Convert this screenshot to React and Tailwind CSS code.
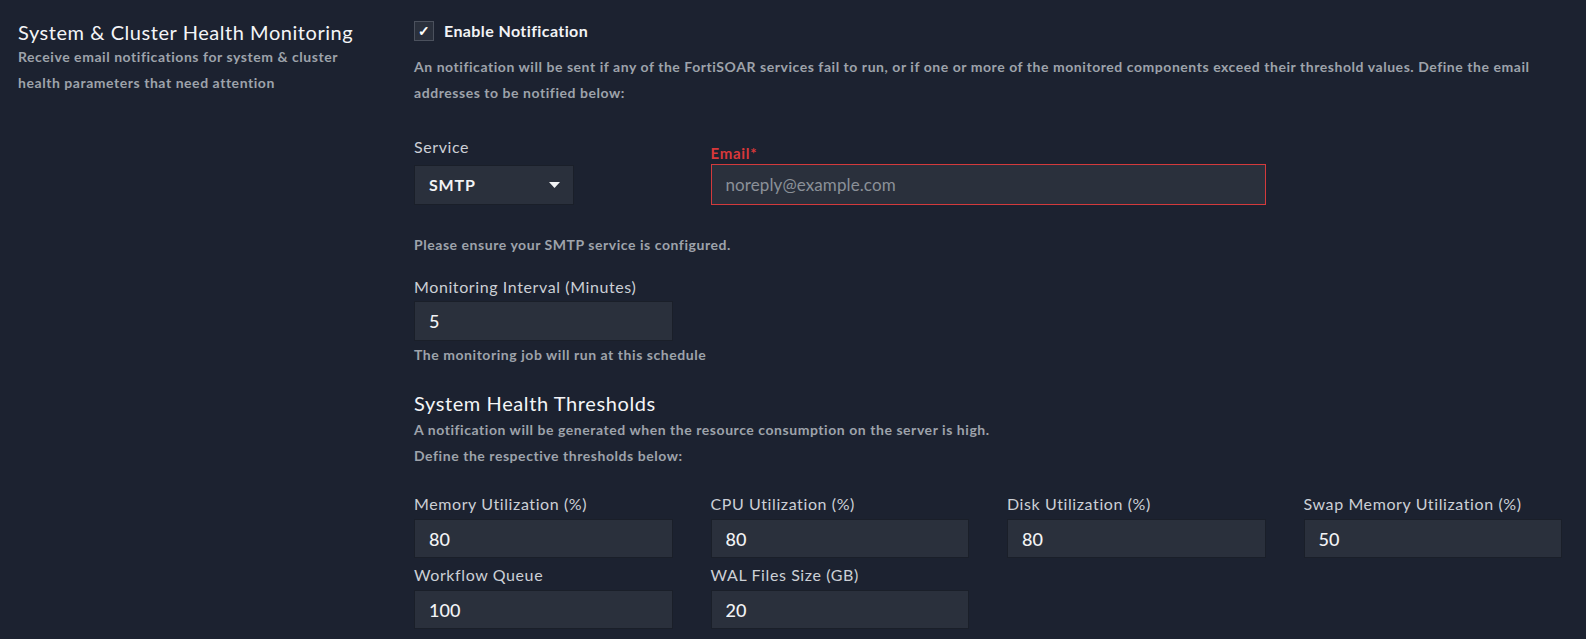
import { useState } from "react";

const thresholds = [
  { label: "Memory Utilization (%)", value: "80" },
  { label: "CPU Utilization (%)", value: "80" },
  { label: "Disk Utilization (%)", value: "80" },
  { label: "Swap Memory Utilization (%)", value: "50" },
  { label: "Workflow Queue", value: "100" },
  { label: "WAL Files Size (GB)", value: "20" },
];

function Field({ label, value }) {
  return (
    <div className="flex flex-col">
      <label className="text-[16px] leading-[22px] tracking-[0.6px] text-[#ccd0d6]">{label}</label>
      <input
        defaultValue={value}
        className="mt-[4px] h-[39px] w-full border border-[#1a1f29] bg-[#2a303c] px-[14px] text-[18px] font-medium text-[#f2f3f5] outline-none"
      />
    </div>
  );
}

function Hint({ children, className = "" }) {
  return (
    <p className={`text-[14px] leading-[26px] font-bold tracking-[0.55px] text-[#9ea3ab] ${className}`}>
      {children}
    </p>
  );
}

export default function App() {
  const [enabled, setEnabled] = useState(true);

  return (
    <div
      className="min-h-[639px] w-full bg-[#1c2230] text-[#ccd0d6]"
      style={{ fontFamily: "Lato, 'Open Sans', sans-serif" }}
    >
      <div className="flex">
        {/* Left - section title */}
        <div className="w-[414px] shrink-0 pl-[18px] pt-[19px]">
          <h2 className="text-[20px] leading-[26px] font-normal tracking-[0.55px] text-[#f4f5f7]">
            System &amp; Cluster Health Monitoring
          </h2>
          <Hint className="mt-[-1px] w-[350px]">
            Receive email notifications for system &amp; cluster health parameters that need attention
          </Hint>
        </div>

        {/* Right - settings form */}
        <div className="flex-1 pr-[24px] pt-[21px] pb-[10px]">
          <label className="flex h-[20px] cursor-pointer items-center gap-[10px]">
            <button
              type="button"
              onClick={() => setEnabled(!enabled)}
              className="flex h-[20px] w-[20px] items-center justify-center border border-[#4b515d] bg-[#2a303c] text-[14px] font-bold leading-none text-white"
            >
              {enabled ? "✓" : ""}
            </button>
            <span className="text-[16px] font-bold tracking-[0.4px] text-[#f2f3f5]">Enable Notification</span>
          </label>

          <Hint className="mt-[13px]">
            An notification will be sent if any of the FortiSOAR services fail to run, or if one or more of the monitored components exceed their threshold values. Define the email addresses to be notified below:
          </Hint>

          <div className="mt-[30px] grid grid-cols-4 gap-x-[38px]">
            <div className="flex flex-col">
              <label className="text-[16px] leading-[22px] tracking-[0.6px] text-[#ccd0d6]">Service</label>
              <div className="mt-[7px] flex h-[40px] w-[160px] items-center justify-between border border-[#1a1f29] bg-[#2a303c] pl-[14px] pr-[13px]">
                <span className="text-[16px] font-bold tracking-[0.8px] text-[#f2f3f5]">SMTP</span>
                <svg width="11" height="6" viewBox="0 0 11 6">
                  <path d="M0 0 H11 L5.5 6 Z" fill="#f2f3f5" />
                </svg>
              </div>
            </div>
            <div className="col-span-2 flex flex-col pt-[6px]">
              <label className="text-[15px] leading-[22px] font-bold tracking-[0.7px] text-[#d9383a]">Email*</label>
              <input
                placeholder="noreply@example.com"
                className="mt-0 h-[41px] w-full border border-[#d33a3c] bg-[#2a303c] px-[14px] text-[17px] tracking-[0.1px] text-[#f2f3f5] outline-none placeholder:text-[#8b9098]"
              />
            </div>
          </div>

          <Hint className="mt-[27px]">Please ensure your SMTP service is configured.</Hint>

          <div className="mt-[18px] grid grid-cols-4 gap-x-[38px]">
            <div className="flex flex-col">
              <label className="text-[16px] leading-[22px] tracking-[0.6px] text-[#ccd0d6]">Monitoring Interval (Minutes)</label>
              <input
                defaultValue="5"
                className="mt-[3px] h-[40px] w-full border border-[#1a1f29] bg-[#2a303c] px-[14px] text-[18px] font-medium text-[#f2f3f5] outline-none"
              />
            </div>
          </div>
          <Hint className="mt-[1px]">The monitoring job will run at this schedule</Hint>

          <h3 className="mt-[22px] text-[20px] leading-[26px] font-normal tracking-[0.6px] text-[#f4f5f7]">
            System Health Thresholds
          </h3>
          <Hint className="mt-[1px]">
            A notification will be generated when the resource consumption on the server is high.
          </Hint>
          <Hint>Define the respective thresholds below:</Hint>

          <div className="mt-[24px] grid grid-cols-4 gap-x-[38px] gap-y-[6px]">
            {thresholds.map((t) => (
              <Field key={t.label} label={t.label} value={t.value} />
            ))}
          </div>
        </div>
      </div>
    </div>
  );
}
